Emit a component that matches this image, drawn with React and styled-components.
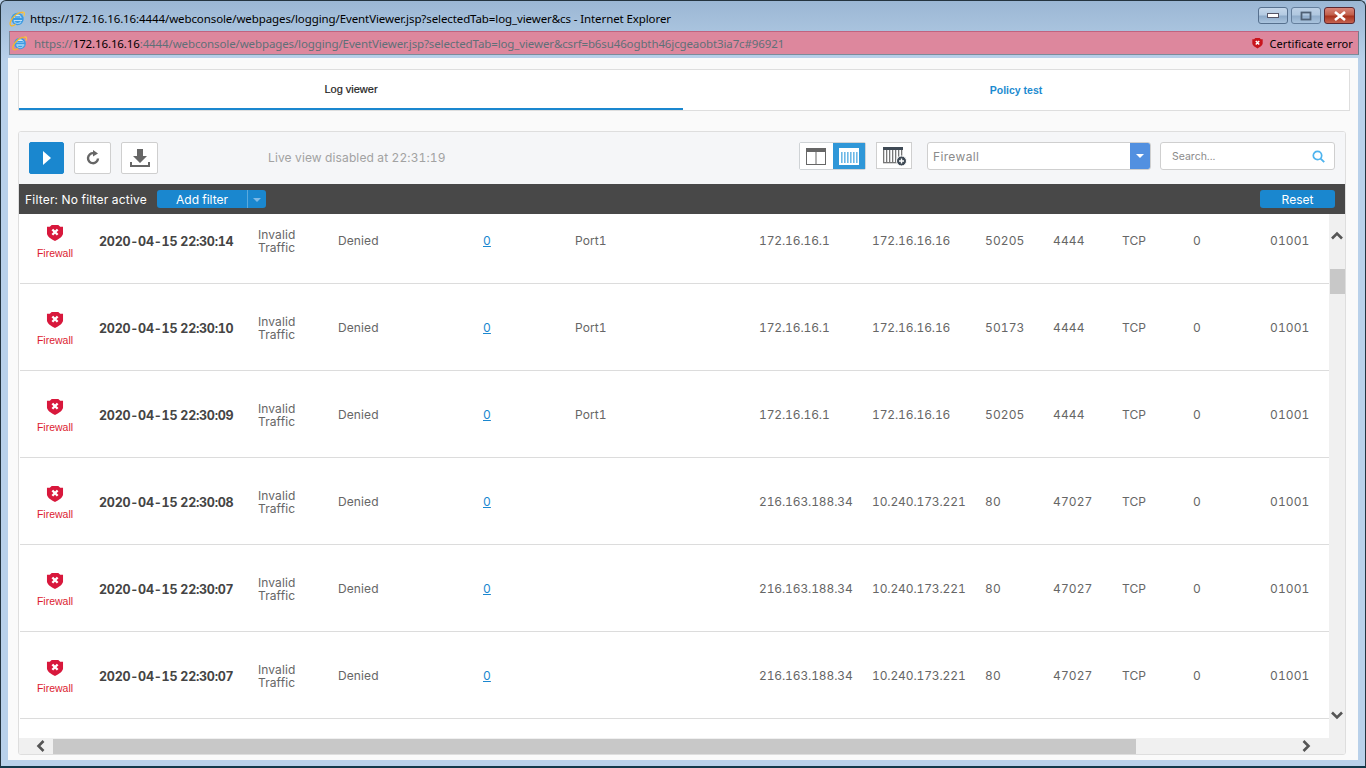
import React from "react";
import styled, { createGlobalStyle } from "styled-components";

const Global = createGlobalStyle`
  html, body { margin: 0; padding: 0; background: #b9d1ea; }
  * { box-sizing: border-box; }
  #root { width: 1366px; height: 768px; overflow: hidden; }
`;

const Win = styled.div`
  width: 1366px; height: 768px; display: flex; flex-direction: column;
  background: linear-gradient(#9bb7d4 0, #a9c3de 30px, #b9d1ea 60px);
  border: 1px solid #24343f; border-bottom: 2px solid #12384a; border-radius: 6px 6px 0 0;
  padding: 0 7px 6px 7px; overflow: hidden;
`;
const TitleBar = styled.div`
  height: 30px; display: flex; align-items: center; padding: 4px 0 0 1px; gap: 4px;
  font: 11.5px "Noto Sans", "Open Sans", sans-serif; color: #000;
`;
const TitleText = styled.span` flex: 1; white-space: nowrap; letter-spacing: -0.1px; `;
const WinButtons = styled.div` display: flex; gap: 3px; margin: -5px 3px 0 0; `;
const WinBtn = styled.div`
  width: ${p => p.$w}px; height: 17px; border-radius: 3px; display: flex; align-items: center; justify-content: center;
  border: 1px solid ${p => p.$close ? "#5b2730" : "#56708e"};
  background: ${p => p.$close ? "linear-gradient(#d9867a 0, #c2604c 45%, #a8331e 55%, #c66350 100%)" : "linear-gradient(#c5d7ea 0, #b4cbe2 45%, #8eabc9 55%, #aac4de 100%)"};
  opacity: ${p => p.$dim ? .8 : 1};
`;
const AddressBar = styled.div`
  height: 24px; margin: 0 -1px 0 1px; display: flex; align-items: center; padding: 0 5px 0 2px; gap: 5px;
  background: #dd879d; border: 1px solid #7c8b9b; border-top-color: #c0637f; border-right-color: #6f7d8c;
  font: 11.5px "Noto Sans", "Open Sans", sans-serif; color: #5f7078; white-space: nowrap;
`;
const Url = styled.span` flex: 1; letter-spacing: -0.12px; padding-left: 1px; `;
const Host = styled.span` color: #000; `;
const CertError = styled.span` display: flex; align-items: center; gap: 6px; color: #000; font-size: 11px; letter-spacing: .1px; `;

const Page = styled.div`
  flex: 1; margin-top: 3px; background: #fafafa; padding: 11px 8px 5px 10px; display: flex; flex-direction: column;
  font-family: Inter, Roboto, sans-serif; min-height: 0; font-variant-numeric: tabular-nums;
`;
const Tabs = styled.div`
  height: 42px; display: flex; border: 1px solid #dedede; background: #fff; flex: none;
`;
const Tab = styled.div`
  flex: ${p => p.$active ? "0 0 664px" : "1"}; display: flex; align-items: center; justify-content: center;
  font: ${p => p.$active ? 400 : 700} ${p => p.$active ? 11 : 10.5}px "Liberation Sans", Arial, sans-serif; color: ${p => p.$active ? "#222" : "#1b8bd0"};
  border-bottom: ${p => p.$active ? "2px solid #1a87cf" : "0"};
  -webkit-text-stroke: ${p => p.$active ? ".2px #222" : "0"};
`;
const Panel = styled.div`
  margin: 20px 4px 0 0; flex: 1; min-height: 0; display: flex; flex-direction: column;
  border: 1px solid #dedede; border-radius: 3px; background: #fff; overflow: hidden;
`;
const Toolbar = styled.div`
  height: 52px; flex: none; background: #f5f6f8; display: flex; align-items: flex-start; padding: 10px 10px 0 10px;
`;
const Btn = styled.div`
  height: 32px; display: flex; align-items: center; justify-content: center; border-radius: 2px;
  border: 1px solid ${p => p.$primary ? "#1a87cf" : "#cfcfcf"}; background: ${p => p.$primary ? "#1a87cf" : "#fff"};
  width: ${p => p.$primary ? 35 : 37}px;
  margin-right: ${p => p.$primary ? 10 : 0}px;
  margin-left: ${p => p.$gap || 0}px;
`;
const Live = styled.div`
  margin-left: 110px; width: 531px; flex: none; font-size: 12px; line-height: 31px; color: #a2a2a2; letter-spacing: .12px; white-space: nowrap;
`;
const Toggle = styled.div` display: flex; width: 67px; height: 28px; border: 1px solid #cfd3d6; border-radius: 2px; background: #fff; `;
const ToggleCell = styled.div`
  flex: 1; display: flex; align-items: center; justify-content: center; background: ${p => p.$on ? "#2f97d8" : "#fff"};
`;
const AddCol = styled.div`
  width: 36px; height: 27px; margin-left: 10px; display: flex; align-items: center; justify-content: center;
  border: 1px solid #cfcfcf; background: #fff;
`;
const Select = styled.div`
  width: 224px; height: 28px; margin-left: 15px; display: flex; border: 1px solid #cfcfcf; border-radius: 3px; background: #fff; overflow: hidden;
  font-size: 12px; color: #8b8b8b; align-items: stretch;
`;
const SelectText = styled.div` flex: 1; padding-left: 5px; display: flex; align-items: center; letter-spacing: .35px; `;
const Caret = styled.div` width: 20px; background: #5290e0; display: flex; align-items: center; justify-content: center; `;
const Tri = styled.div`
  width: 0; height: 0; border-left: 4px solid transparent; border-right: 4px solid transparent; border-top: 4px solid ${p => p.$c || "#fff"};
`;
const Search = styled.div`
  width: 175px; height: 28px; margin-left: 9px; display: flex; align-items: center; justify-content: space-between; padding: 0 9px 0 11px;
  border: 1px solid #cfcfcf; border-radius: 3px; background: #fff; font-size: 10.5px; color: #8b8b8b;
`;
const FilterBar = styled.div`
  height: 30px; flex: none; background: #484848; display: flex; align-items: center; padding: 0 10px 0 6px; color: #fff; font-size: 12px;
`;
const FilterLabel = styled.span` width: 132px; flex: none; white-space: nowrap; letter-spacing: .2px; `;
const AddFilter = styled.div`
  width: 109px; height: 18px; background: #1a87cf; border-radius: 3px; display: flex; align-items: center;
`;
const AddFilterText = styled.span` flex: 1; text-align: center; border-right: 1px solid #5aa9dd; line-height: 19px; height: 18px; `;
const AddFilterCaret = styled.span` width: 18px; display: flex; justify-content: center; padding-top: 2px; `;
const Reset = styled.div`
  margin-left: auto; width: 75px; height: 18px; background: #1a87cf; border-radius: 3px; text-align: center; line-height: 19px;
`;
const Body = styled.div` flex: 1; min-height: 0; display: grid; grid-template-columns: 1fr 16px; grid-template-rows: 1fr 16px; `;
const List = styled.div` overflow: hidden; min-width: 0; min-height: 0; padding-left: 1px; `;
const Rows = styled.div` margin-top: -17px; `;
const Row = styled.div`
  height: 87px; display: grid; align-items: center; border-bottom: 1px solid #dcdcdc;
  grid-template-columns: 79px 159px 80px 145px 92px 184px 113px 113px 68px 69px 71px 77px 1fr;
  font-size: 12px; color: #666; white-space: nowrap; letter-spacing: .1px;
`;
const Source = styled.div` display: flex; flex-direction: column; align-items: center; gap: 6px; width: 70px; margin-top: 3px; font: 10.5px "Liberation Sans", Arial, sans-serif; color: #dc1c30; letter-spacing: 0; `;
const Time = styled.div` font-size: 12.5px; font-weight: 700; color: #444; letter-spacing: -.26px; margin-top: 2px; `;
const Type = styled.div` line-height: 13px; white-space: normal; width: 60px; margin-top: 2px; `;
const LogLink = styled.a` color: #1b87cf; text-decoration: underline; `;
const Num = styled.div` letter-spacing: ${p => p.$s || 0}px; `;
const VBar = styled.div` background: #f0f0f0; display: flex; flex-direction: column; align-items: center; padding-top: 15px; `;
const VThumb = styled.div` width: 15px; height: 25px; margin-top: 26px; background: #c8c8c8; `;
const VEnd = styled.div` margin-top: auto; margin-bottom: 12px; `;
const HBar = styled.div` background: #f0f0f0; display: flex; align-items: center; padding: 0 16px 0 15px; `;
const HThumb = styled.div` width: 1083px; height: 15px; margin-left: 5px; background: #c8c8c8; `;
const HEnd = styled.div` margin-left: auto; display: flex; `;
const Corner = styled.div` background: #f0f0f0; `;

const IE = ({ s = 17 }) => (
  <svg width={s} height={s} viewBox="0 0 17 17" style={{ flex: "none" }}>
    <circle cx="8.5" cy="9" r="6.2" fill="#3d9be2" />
    <path d="M8.6 4.6c2.2 0 3.7 1.4 3.9 3.5H4.7c.3-2 1.8-3.5 3.9-3.5z" fill="#cfe9fb" />
    <path d="M5.6 7h5.9" stroke="#3d9be2" strokeWidth="1.5" />
    <path d="M4.6 10.2h8.4v.9H4.8z" fill="#eaf6fd" />
    <path d="M5 11.2c.7 1.6 2 2.3 3.6 2.3 1.5 0 2.7-.7 3.4-1.9" fill="none" stroke="#9ed2f5" strokeWidth="1.1" />
    <path d="M14.3 3.2C12.6 1.3 8.2 3 5 6.4 1.8 9.8.2 13.7 1.6 15.2c1 1 3.3.4 5-1" fill="none" stroke="#f4b62e" strokeWidth="1.3" />
    <path d="M13.2 2.2c2.2-.6 3.1 1 1.6 4" fill="none" stroke="#f6c64a" strokeWidth="1.2" />
  </svg>
);
const Shield = ({ w = 18, h = 17, c = "#d8183c" }) => (
  <svg width={w} height={h} viewBox="0 0 18 18">
    <path d="M0.5 3 L3.5 3 L5.5 1 L12.5 1 L14.5 3 L17.5 3 L17.5 10 C17.5 13 13 16 9 18 C5 16 0.5 13 0.5 10 Z" fill={c} />
    <path d="M6.2 5.8 L11.8 11.4 M11.8 5.8 L6.2 11.4" stroke="#fff" strokeWidth="2.5" />
  </svg>
);
const Chevron = ({ d }) => (
  <svg width="14" height="14" viewBox="0 0 14 14">
    <path d={d} fill="none" stroke="#555" strokeWidth="2.6" />
  </svg>
);
const Bars = ({ fill, line, header }) => (
  <svg width="20" height="17" viewBox="0 0 20 17">
    <rect width="20" height="17" fill={fill} />
    <rect width="20" height="3" fill={header} />
    {[2, 5, 8, 11, 14, 17].map(x => <rect key={x} x={x} y="4" width="1.6" height="11" fill={line} />)}
  </svg>
);

const rows = [
  ["2020-04-15 22:30:14", "Port1", "172.16.16.1", "172.16.16.16", "50205", "4444"],
  ["2020-04-15 22:30:10", "Port1", "172.16.16.1", "172.16.16.16", "50173", "4444"],
  ["2020-04-15 22:30:09", "Port1", "172.16.16.1", "172.16.16.16", "50205", "4444"],
  ["2020-04-15 22:30:08", "", "216.163.188.34", "10.240.173.221", "80", "47027"],
  ["2020-04-15 22:30:07", "", "216.163.188.34", "10.240.173.221", "80", "47027"],
  ["2020-04-15 22:30:07", "", "216.163.188.34", "10.240.173.221", "80", "47027"],
];

export default function App() {
  return (
    <Win>
      <Global />
      <TitleBar>
        <IE />
        <TitleText>https://172.16.16.16:4444/webconsole/webpages/logging/EventViewer.jsp?selectedTab=log_viewer&amp;cs - Internet Explorer</TitleText>
        <WinButtons>
          <WinBtn $w={30}><svg width="12" height="5"><rect x=".5" y=".5" width="11" height="4" fill="#fff" stroke="#556" /></svg></WinBtn>
          <WinBtn $w={30} $dim><svg width="12" height="10"><rect x="1.5" y="1.5" width="9" height="7" fill="none" stroke="#3a4a5c" strokeWidth="1.8" /></svg></WinBtn>
          <WinBtn $w={31} $close><svg width="14" height="10"><path d="M2 1l10 8M12 1L2 9" stroke="#fff" strokeWidth="2.6" /></svg></WinBtn>
        </WinButtons>
      </TitleBar>
      <AddressBar>
        <IE s={16} />
        <Url>https://<Host>172.16.16.16</Host>:4444/webconsole/webpages/logging/EventViewer.jsp?selectedTab=log_viewer&amp;csrf=b6su46ogbth46jcgeaobt3ia7c#96921</Url>
        <CertError><Shield w={11} h={12} c="#c8141c" />Certificate error</CertError>
      </AddressBar>
      <Page>
        <Tabs>
          <Tab $active>Log viewer</Tab>
          <Tab>Policy test</Tab>
        </Tabs>
        <Panel>
          <Toolbar>
            <Btn $primary><svg width="10" height="14" viewBox="0 0 10 14"><path d="M1 0l8 7-8 7z" fill="#fff" /></svg></Btn>
            <Btn>
              <svg width="16" height="16" viewBox="0 0 16 16"><path d="M13 8.5A5 5 0 1 1 8.5 3.2" fill="none" stroke="#666" strokeWidth="2.4" /><path d="M8 0l5 3.4L8 6.6z" fill="#666" /></svg>
            </Btn>
            <Btn $gap={10}>
              <svg width="20" height="20" viewBox="0 0 20 20"><path d="M7 1h6v7h4l-7 7-7-7h4z" fill="#666" /><path d="M1 14v4h18v-4" fill="none" stroke="#666" strokeWidth="2" /></svg>
            </Btn>
            <Live>Live view disabled at 22:31:19</Live>
            <Toggle>
              <ToggleCell>
                <svg width="20" height="17" viewBox="0 0 20 17"><rect x=".5" y=".5" width="19" height="16" fill="#fff" stroke="#666" /><rect width="20" height="4" fill="#666" /><rect x="9.5" y="4" width="1" height="13" fill="#666" /></svg>
              </ToggleCell>
              <ToggleCell $on><Bars fill="#fff" line="#6db8e6" header="#fff" /></ToggleCell>
            </Toggle>
            <AddCol>
              <svg width="25" height="22" viewBox="0 0 25 22">
                <rect x="1" y="2" width="20" height="3" fill="#3f4a55" />
                {[1, 4, 7, 10, 13, 16, 19].map(x => <rect key={x} x={x} y="5" width="1.3" height="13" fill="#777" />)}
                <rect x="1" y="17" width="14" height="1.3" fill="#777" />
                <circle cx="19.5" cy="16" r="5" fill="#3f4a55" stroke="#fff" strokeWidth="1" />
                <path d="M17 16h5M19.5 13.5v5" stroke="#fff" strokeWidth="1.4" />
              </svg>
            </AddCol>
            <Select>
              <SelectText>Firewall</SelectText>
              <Caret><Tri /></Caret>
            </Select>
            <Search>
              Search...
              <svg width="13" height="13" viewBox="0 0 13 13"><circle cx="5.5" cy="5.5" r="4.2" fill="none" stroke="#4db3ee" strokeWidth="1.7" /><path d="M8.6 8.6l3.6 3.6" stroke="#4db3ee" strokeWidth="1.9" /></svg>
            </Search>
          </Toolbar>
          <FilterBar>
            <FilterLabel>Filter: No filter active</FilterLabel>
            <AddFilter>
              <AddFilterText>Add filter</AddFilterText>
              <AddFilterCaret><Tri $c="#7db9e6" /></AddFilterCaret>
            </AddFilter>
            <Reset>Reset</Reset>
          </FilterBar>
          <Body>
            <List>
              <Rows>
                {rows.map((r, i) => (
                  <Row key={i}>
                    <Source><Shield />Firewall</Source>
                    <Time>{r[0]}</Time>
                    <Type>Invalid Traffic</Type>
                    <div>Denied</div>
                    <div><LogLink>0</LogLink></div>
                    <div>{r[1]}</div>
                    <Num $s={-0.12}>{r[2]}</Num>
                    <Num $s={-0.12}>{r[3]}</Num>
                    <Num $s={0.1}>{r[4]}</Num>
                    <Num $s={0.1}>{r[5]}</Num>
                    <div>TCP</div>
                    <Num $s={0.1}>0</Num>
                    <Num $s={0.1}>01001</Num>
                  </Row>
                ))}
              </Rows>
            </List>
            <VBar>
              <Chevron d="M2 9.5l5-5 5 5" />
              <VThumb />
              <VEnd><Chevron d="M2 4.5l5 5 5-5" /></VEnd>
            </VBar>
            <HBar>
              <Chevron d="M9.5 2l-5 5 5 5" />
              <HThumb />
              <HEnd><Chevron d="M4.5 2l5 5-5 5" /></HEnd>
            </HBar>
            <Corner />
          </Body>
        </Panel>
      </Page>
    </Win>
  );
}
